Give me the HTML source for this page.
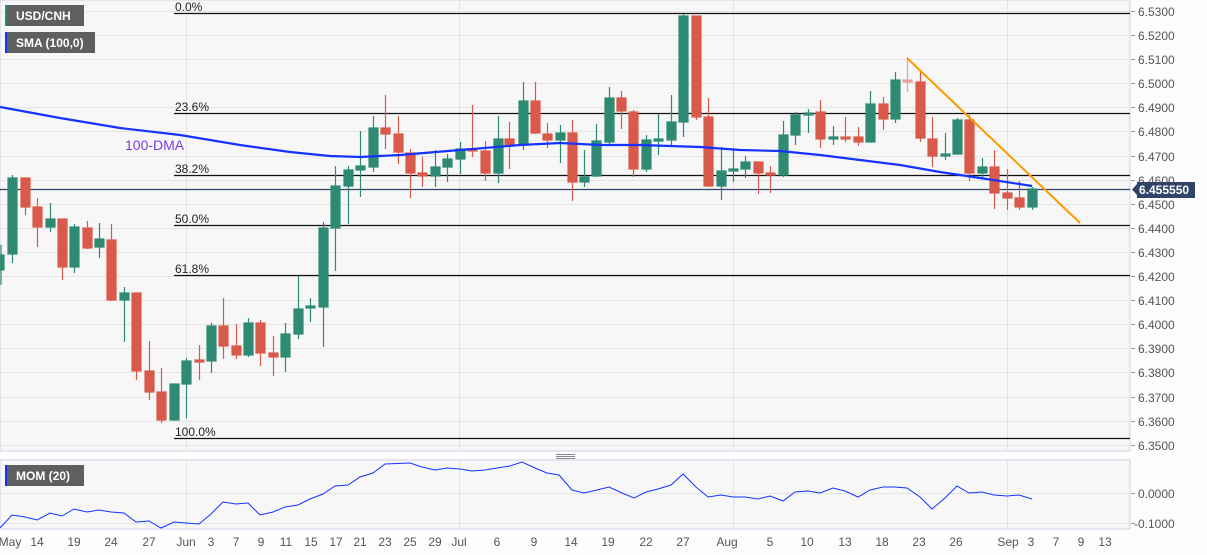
<!DOCTYPE html>
<html><head><meta charset="utf-8"><style>
html,body{margin:0;padding:0;background:#fff;}
svg{display:block;font-family:"Liberation Sans",Arial,sans-serif;}
</style></head><body>
<svg width="1207" height="555" viewBox="0 0 1207 555" xmlns="http://www.w3.org/2000/svg">
<rect width="1207" height="555" fill="#fdfdfd"/>
<rect x="0" y="0" width="1130" height="451" fill="#f7f7f7" stroke="#cdd3e6"/>
<rect x="0" y="460" width="1130" height="69" fill="#f7f7f7" stroke="#cdd3e6"/>
<g stroke="#e4e4e4" stroke-width="1">
<line x1="0" y1="11.5" x2="1130" y2="11.5"/><line x1="0" y1="35.5" x2="1130" y2="35.5"/><line x1="0" y1="59.5" x2="1130" y2="59.5"/><line x1="0" y1="83.5" x2="1130" y2="83.5"/><line x1="0" y1="107.5" x2="1130" y2="107.5"/><line x1="0" y1="131.5" x2="1130" y2="131.5"/><line x1="0" y1="156.5" x2="1130" y2="156.5"/><line x1="0" y1="180.5" x2="1130" y2="180.5"/><line x1="0" y1="204.5" x2="1130" y2="204.5"/><line x1="0" y1="228.5" x2="1130" y2="228.5"/><line x1="0" y1="252.5" x2="1130" y2="252.5"/><line x1="0" y1="276.5" x2="1130" y2="276.5"/><line x1="0" y1="300.5" x2="1130" y2="300.5"/><line x1="0" y1="324.5" x2="1130" y2="324.5"/><line x1="0" y1="348.5" x2="1130" y2="348.5"/><line x1="0" y1="372.5" x2="1130" y2="372.5"/><line x1="0" y1="397.5" x2="1130" y2="397.5"/><line x1="0" y1="421.5" x2="1130" y2="421.5"/><line x1="0" y1="445.5" x2="1130" y2="445.5"/>
<line x1="186.5" y1="0" x2="186.5" y2="451"/><line x1="459.5" y1="0" x2="459.5" y2="451"/><line x1="733.5" y1="0" x2="733.5" y2="451"/><line x1="1007.5" y1="0" x2="1007.5" y2="451"/>
<line x1="0" y1="493.5" x2="1130" y2="493.5"/><line x1="0" y1="523.5" x2="1130" y2="523.5"/>
<line x1="186.5" y1="460" x2="186.5" y2="529"/><line x1="459.5" y1="460" x2="459.5" y2="529"/><line x1="733.5" y1="460" x2="733.5" y2="529"/><line x1="1007.5" y1="460" x2="1007.5" y2="529"/>
</g>
<!-- fib lines -->
<g stroke="#111" stroke-width="1.3">
<line x1="174" y1="13.5" x2="1130" y2="13.5"/><line x1="174" y1="113.5" x2="1130" y2="113.5"/><line x1="174" y1="175.5" x2="1130" y2="175.5"/><line x1="174" y1="225.5" x2="1130" y2="225.5"/><line x1="174" y1="275.5" x2="1130" y2="275.5"/><line x1="174" y1="438.5" x2="1130" y2="438.5"/>
</g>
<g font-size="12" fill="#222">
<text x="175" y="11">0.0%</text><text x="175" y="111">23.6%</text><text x="175" y="173">38.2%</text><text x="175" y="223">50.0%</text><text x="175" y="273">61.8%</text><text x="175" y="436">100.0%</text>
</g>
<line x1="0" y1="189.5" x2="1130" y2="189.5" stroke="#2f4468" stroke-width="1.2"/>
<!-- candles -->
<g stroke-width="1.2">
<g stroke="#2f8a73" fill="#2f8a73">
<line x1="1" y1="245" x2="1" y2="285"/><rect x="-3" y="255" width="7" height="15"/>
<line x1="12.5" y1="175" x2="12.5" y2="263"/><rect x="8" y="178" width="9" height="76"/>
<line x1="50.5" y1="203" x2="50.5" y2="232"/><rect x="46" y="219" width="9" height="8"/>
<line x1="74.5" y1="224" x2="74.5" y2="273"/><rect x="70" y="227" width="9" height="40"/>
<line x1="99.5" y1="223" x2="99.5" y2="258"/><rect x="95" y="239" width="9" height="8"/>
<line x1="124.5" y1="287" x2="124.5" y2="342"/><rect x="120" y="293" width="9" height="7"/>
<line x1="174.5" y1="384" x2="174.5" y2="420"/><rect x="170" y="384" width="9" height="36"/>
<line x1="186.5" y1="358" x2="186.5" y2="418"/><rect x="182" y="361" width="9" height="23"/>
<line x1="211.5" y1="323" x2="211.5" y2="373"/><rect x="207" y="326" width="9" height="35"/>
<line x1="248.5" y1="318" x2="248.5" y2="357"/><rect x="244" y="323" width="9" height="32"/>
<line x1="285.5" y1="323" x2="285.5" y2="372"/><rect x="281" y="334" width="9" height="23"/>
<line x1="298.5" y1="276" x2="298.5" y2="339"/><rect x="294" y="309" width="9" height="25"/>
<line x1="310.5" y1="298" x2="310.5" y2="322"/><rect x="306" y="306" width="9" height="2"/>
<line x1="323.5" y1="222" x2="323.5" y2="347"/><rect x="319" y="228" width="9" height="79"/>
<line x1="335.5" y1="166" x2="335.5" y2="271"/><rect x="331" y="186" width="9" height="42"/>
<line x1="348.5" y1="166" x2="348.5" y2="224"/><rect x="344" y="170" width="9" height="16"/>
<line x1="360.5" y1="131" x2="360.5" y2="197"/><rect x="356" y="166" width="9" height="4"/>
<line x1="373.5" y1="116" x2="373.5" y2="172"/><rect x="369" y="128" width="9" height="39"/>
<line x1="435.5" y1="150" x2="435.5" y2="187"/><rect x="431" y="167" width="9" height="9"/>
<line x1="447.5" y1="154" x2="447.5" y2="182"/><rect x="443" y="159" width="9" height="8"/>
<line x1="460.5" y1="142" x2="460.5" y2="174"/><rect x="456" y="149" width="9" height="10"/>
<line x1="498.5" y1="116" x2="498.5" y2="183"/><rect x="494" y="139" width="9" height="34"/>
<line x1="523.5" y1="82" x2="523.5" y2="150"/><rect x="519" y="101" width="9" height="44"/>
<line x1="560.5" y1="125" x2="560.5" y2="163"/><rect x="556" y="133" width="9" height="7"/>
<line x1="584.5" y1="150" x2="584.5" y2="187"/><rect x="580" y="177" width="9" height="5"/>
<line x1="596.5" y1="124" x2="596.5" y2="177"/><rect x="592" y="141" width="9" height="35"/>
<line x1="609.5" y1="87" x2="609.5" y2="145"/><rect x="605" y="98" width="9" height="44"/>
<line x1="646.5" y1="135" x2="646.5" y2="172"/><rect x="642" y="140" width="9" height="29"/>
<line x1="658.5" y1="114" x2="658.5" y2="155"/><rect x="654" y="139" width="9" height="2"/>
<line x1="671.5" y1="95" x2="671.5" y2="147"/><rect x="667" y="122" width="9" height="18"/>
<line x1="683.5" y1="14" x2="683.5" y2="137"/><rect x="679" y="16" width="9" height="106"/>
<line x1="721.5" y1="147" x2="721.5" y2="200"/><rect x="717" y="171" width="9" height="15"/>
<line x1="733.5" y1="148" x2="733.5" y2="182"/><rect x="729" y="169" width="9" height="2"/>
<line x1="745.5" y1="156" x2="745.5" y2="178"/><rect x="741" y="162" width="9" height="7"/>
<line x1="783.5" y1="121" x2="783.5" y2="177"/><rect x="779" y="135" width="9" height="40"/>
<line x1="795.5" y1="112" x2="795.5" y2="145"/><rect x="791" y="115" width="9" height="20"/>
<line x1="808.5" y1="109" x2="808.5" y2="133"/><rect x="804" y="113" width="9" height="2"/>
<line x1="833.5" y1="126" x2="833.5" y2="145"/><rect x="829" y="137" width="9" height="2"/>
<line x1="870.5" y1="91" x2="870.5" y2="142"/><rect x="866" y="104" width="9" height="38"/>
<line x1="895.5" y1="72" x2="895.5" y2="123"/><rect x="891" y="80" width="9" height="39"/>
<line x1="945.5" y1="133" x2="945.5" y2="160"/><rect x="941" y="154" width="9" height="2"/>
<line x1="957.5" y1="118" x2="957.5" y2="155"/><rect x="953" y="120" width="9" height="34"/>
<line x1="982.5" y1="158" x2="982.5" y2="178"/><rect x="978" y="167" width="9" height="6"/>
<line x1="1032.5" y1="187" x2="1032.5" y2="210"/><rect x="1028" y="189" width="9" height="18"/>
</g>
<g stroke="#d9594b" fill="#d9594b">
<line x1="25.5" y1="178" x2="25.5" y2="215"/><rect x="21" y="178" width="9" height="29"/>
<line x1="37.5" y1="198" x2="37.5" y2="247"/><rect x="33" y="207" width="9" height="20"/>
<line x1="62.5" y1="219" x2="62.5" y2="280"/><rect x="58" y="219" width="9" height="48"/>
<line x1="87.5" y1="221" x2="87.5" y2="249"/><rect x="83" y="228" width="9" height="20"/>
<line x1="111.5" y1="224" x2="111.5" y2="301"/><rect x="107" y="240" width="9" height="60"/>
<line x1="136.5" y1="293" x2="136.5" y2="380"/><rect x="132" y="293" width="9" height="78"/>
<line x1="149.5" y1="341" x2="149.5" y2="400"/><rect x="145" y="371" width="9" height="21"/>
<line x1="161.5" y1="368" x2="161.5" y2="423"/><rect x="157" y="392" width="9" height="28"/>
<line x1="199.5" y1="345" x2="199.5" y2="380"/><rect x="195" y="360" width="9" height="2"/>
<line x1="223.5" y1="298" x2="223.5" y2="359"/><rect x="219" y="326" width="9" height="20"/>
<line x1="236.5" y1="324" x2="236.5" y2="359"/><rect x="232" y="346" width="9" height="9"/>
<line x1="260.5" y1="320" x2="260.5" y2="366"/><rect x="256" y="323" width="9" height="30"/>
<line x1="273.5" y1="336" x2="273.5" y2="376"/><rect x="269" y="353" width="9" height="4"/>
<line x1="385.5" y1="95" x2="385.5" y2="149"/><rect x="381" y="128" width="9" height="6"/>
<line x1="398.5" y1="116" x2="398.5" y2="164"/><rect x="394" y="134" width="9" height="18"/>
<line x1="410.5" y1="149" x2="410.5" y2="198"/><rect x="406" y="153" width="9" height="20"/>
<line x1="422.5" y1="157" x2="422.5" y2="187"/><rect x="418" y="173" width="9" height="3"/>
<line x1="472.5" y1="105" x2="472.5" y2="157"/><rect x="468" y="149" width="9" height="2"/>
<line x1="485.5" y1="141" x2="485.5" y2="181"/><rect x="481" y="151" width="9" height="22"/>
<line x1="509.5" y1="122" x2="509.5" y2="169"/><rect x="505" y="139" width="9" height="6"/>
<line x1="535.5" y1="82" x2="535.5" y2="134"/><rect x="531" y="101" width="9" height="32"/>
<line x1="547.5" y1="123" x2="547.5" y2="148"/><rect x="543" y="134" width="9" height="6"/>
<line x1="572.5" y1="120" x2="572.5" y2="201"/><rect x="568" y="133" width="9" height="49"/>
<line x1="621.5" y1="91" x2="621.5" y2="129"/><rect x="617" y="98" width="9" height="13"/>
<line x1="633.5" y1="110" x2="633.5" y2="177"/><rect x="629" y="112" width="9" height="57"/>
<line x1="696.5" y1="16" x2="696.5" y2="120"/><rect x="692" y="16" width="9" height="101"/>
<line x1="708.5" y1="98" x2="708.5" y2="187"/><rect x="704" y="117" width="9" height="69"/>
<line x1="758.5" y1="162" x2="758.5" y2="194"/><rect x="754" y="162" width="9" height="11"/>
<line x1="770.5" y1="166" x2="770.5" y2="193"/><rect x="766" y="173" width="9" height="2"/>
<line x1="820.5" y1="100" x2="820.5" y2="148"/><rect x="816" y="112" width="9" height="27"/>
<line x1="845.5" y1="117" x2="845.5" y2="142"/><rect x="841" y="137" width="9" height="2"/>
<line x1="858.5" y1="127" x2="858.5" y2="146"/><rect x="854" y="137" width="9" height="5"/>
<line x1="883.5" y1="97" x2="883.5" y2="130"/><rect x="879" y="104" width="9" height="15"/>
<line x1="920.5" y1="71" x2="920.5" y2="142"/><rect x="916" y="82" width="9" height="56"/>
<line x1="932.5" y1="117" x2="932.5" y2="167"/><rect x="928" y="139" width="9" height="17"/>
<line x1="969.5" y1="115" x2="969.5" y2="181"/><rect x="965" y="120" width="9" height="53"/>
<line x1="994.5" y1="150" x2="994.5" y2="209"/><rect x="990" y="167" width="9" height="26"/>
<line x1="1007.5" y1="169" x2="1007.5" y2="210"/><rect x="1003" y="193" width="9" height="5"/>
<line x1="1019.5" y1="181" x2="1019.5" y2="210"/><rect x="1015" y="198" width="9" height="9"/>
</g>
<g stroke="#e8a09a" fill="#e8a09a">
<line x1="907.5" y1="58" x2="907.5" y2="92"/><rect x="903" y="80" width="9" height="2"/>
</g>
</g>
<!-- SMA -->
<polyline fill="none" stroke="#1533ff" stroke-width="2.2" points="0,107 60,118 120,128 180,135 240,145 290,152 330,156 360,157 400,155 460,150 520,145 560,143 600,145 640,145 670,146 700,147 740,150 780,151 820,155 860,160 900,165 940,172 980,178 1032,186"/>
<text x="125" y="150" font-size="14" fill="#7a3fe0">100-DMA</text>
<line x1="907" y1="58" x2="1080" y2="223" stroke="#ff9900" stroke-width="2"/>
<!-- MOM -->
<polyline fill="none" stroke="#1533ff" stroke-width="1" points="0,528 12,515 25,517 37,520 50,513 62,516 74,509 87,512 99,510 111,512 124,513 136,522 149,521 161,528 174,522 186,523 199,524 211,514 223,502 236,504 248,503 260,515 273,512 285,507 298,505 310,499 323,494 335,486 348,485 360,477 373,473 385,464 410,463 422,467 435,470 447,468 460,469 472,471 485,470 497,468 510,466 522,462 535,468 547,473 559,475 572,490 584,493 597,490 609,487 622,493 634,498 646,492 658,489 671,485 683,474 696,487 708,497 721,495 733,497 745,497 758,499 770,496 783,501 795,492 808,491 820,493 833,488 845,491 858,497 870,490 883,487 895,487 907,488 920,497 932,509 945,498 957,486 969,493 982,492 994,495 1007,496 1019,495 1032,499"/>
<!-- labels -->
<rect x="5" y="5" width="79" height="21" fill="#5f5f5f"/><rect x="5" y="5" width="2" height="21" fill="#2f8a73"/>
<text x="16" y="20" font-size="12" font-weight="bold" fill="#fff">USD/CNH</text>
<rect x="5" y="32" width="90" height="21" fill="#5f5f5f"/><rect x="5" y="32" width="2" height="21" fill="#1533ff"/>
<text x="16" y="47" font-size="12" font-weight="bold" fill="#fff">SMA (100,0)</text>
<rect x="5" y="465" width="79" height="21" fill="#5f5f5f"/><rect x="5" y="465" width="2" height="21" fill="#1533ff"/>
<text x="16" y="480" font-size="12" font-weight="bold" fill="#fff">MOM (20)</text>
<!-- separator -->
<g stroke="#888" stroke-width="1"><line x1="556" y1="454.5" x2="575" y2="454.5"/><line x1="556" y1="456.5" x2="575" y2="456.5"/><line x1="556" y1="458.5" x2="575" y2="458.5"/></g>
<!-- right axis -->
<g font-size="12" fill="#555">
<g stroke="#999"><line x1="1131" y1="11.5" x2="1135" y2="11.5"/><line x1="1131" y1="35.5" x2="1135" y2="35.5"/><line x1="1131" y1="59.5" x2="1135" y2="59.5"/><line x1="1131" y1="83.5" x2="1135" y2="83.5"/><line x1="1131" y1="107.5" x2="1135" y2="107.5"/><line x1="1131" y1="131.5" x2="1135" y2="131.5"/><line x1="1131" y1="156.5" x2="1135" y2="156.5"/><line x1="1131" y1="180.5" x2="1135" y2="180.5"/><line x1="1131" y1="204.5" x2="1135" y2="204.5"/><line x1="1131" y1="228.5" x2="1135" y2="228.5"/><line x1="1131" y1="252.5" x2="1135" y2="252.5"/><line x1="1131" y1="276.5" x2="1135" y2="276.5"/><line x1="1131" y1="300.5" x2="1135" y2="300.5"/><line x1="1131" y1="324.5" x2="1135" y2="324.5"/><line x1="1131" y1="348.5" x2="1135" y2="348.5"/><line x1="1131" y1="372.5" x2="1135" y2="372.5"/><line x1="1131" y1="397.5" x2="1135" y2="397.5"/><line x1="1131" y1="421.5" x2="1135" y2="421.5"/><line x1="1131" y1="445.5" x2="1135" y2="445.5"/><line x1="1131" y1="493.5" x2="1135" y2="493.5"/><line x1="1131" y1="523.5" x2="1135" y2="523.5"/></g>
<text x="1138" y="16">6.5300</text><text x="1138" y="40">6.5200</text><text x="1138" y="64">6.5100</text><text x="1138" y="88">6.5000</text><text x="1138" y="112">6.4900</text><text x="1138" y="136">6.4800</text><text x="1138" y="161">6.4700</text><text x="1138" y="185">6.4600</text><text x="1138" y="209">6.4500</text><text x="1138" y="233">6.4400</text><text x="1138" y="257">6.4300</text><text x="1138" y="281">6.4200</text><text x="1138" y="305">6.4100</text><text x="1138" y="329">6.4000</text><text x="1138" y="353">6.3900</text><text x="1138" y="377">6.3800</text><text x="1138" y="402">6.3700</text><text x="1138" y="426">6.3600</text><text x="1138" y="450">6.3500</text>
<text x="1138" y="498">0.0000</text><text x="1134" y="528">-0.1000</text>
</g>
<path d="M1132,189.5 L1137,184 L1137,182 L1195,182 L1195,198 L1137,198 L1137,195 Z" fill="#2f4468"/>
<text x="1139" y="194" font-size="12" font-weight="bold" fill="#fff">6.455550</text>
<!-- bottom axis -->
<g font-size="12" fill="#555" text-anchor="middle">
<text x="10" y="546">May</text><text x="37" y="546">14</text><text x="74" y="546">19</text><text x="111" y="546">24</text><text x="149" y="546">27</text><text x="186" y="546">Jun</text><text x="211" y="546">3</text><text x="236" y="546">7</text><text x="261" y="546">9</text><text x="286" y="546">11</text><text x="311" y="546">15</text><text x="336" y="546">17</text><text x="360" y="546">21</text><text x="385" y="546">23</text><text x="410" y="546">25</text><text x="435" y="546">29</text><text x="459" y="546">Jul</text><text x="497" y="546">6</text><text x="534" y="546">9</text><text x="571" y="546">14</text><text x="608" y="546">19</text><text x="646" y="546">22</text><text x="683" y="546">27</text><text x="727" y="546">Aug</text><text x="770" y="546">5</text><text x="807" y="546">10</text><text x="845" y="546">13</text><text x="882" y="546">18</text><text x="919" y="546">23</text><text x="956" y="546">26</text><text x="1008" y="546">Sep</text><text x="1031" y="546">3</text><text x="1056" y="546">7</text><text x="1081" y="546">9</text><text x="1105" y="546">13</text>
</g>
</svg>
</body></html>
